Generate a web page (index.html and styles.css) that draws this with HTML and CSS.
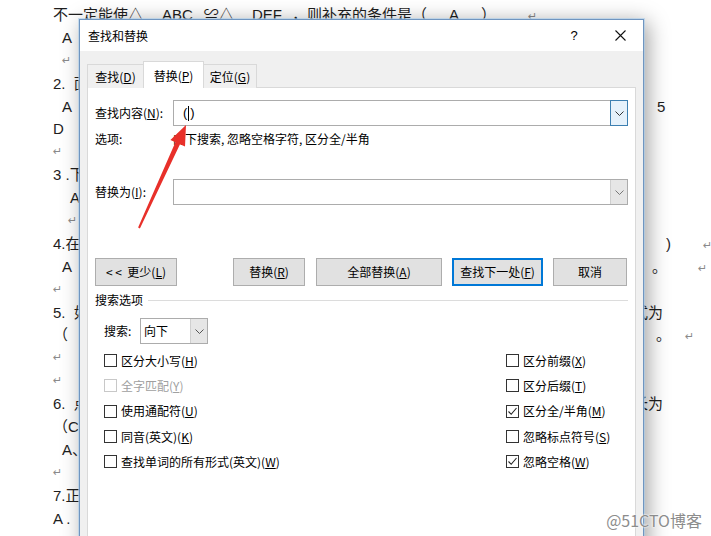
FILE: index.html
```html
<!DOCTYPE html>
<html lang="zh">
<head>
<meta charset="utf-8">
<title>查找和替换</title>
<link rel="stylesheet" href="styles.css">
</head>
<body>
<div class="doc">
  <div class="ln"><span>不一定能使△<span class="m19">ABC</span><span class="m11">≌△</span><span class="m18">DEF</span><span class="m10">，则补充的条件是（</span><span class="m22">A</span><span class="m22">）</span><span class="m32 ret">↵</span></span></div>
  <div class="ln"><span class="i9">A</span></div>
  <div class="ln"><span class="i9 ret">↵</span></div>
  <div class="ln"><span>2.&nbsp;&nbsp;面</span></div>
  <div class="ln"><span class="i9">A</span><span class="m24">5</span></div>
  <div class="ln"><span>D</span></div>
  <div class="ln"><span class="ret">↵</span></div>
  <div class="ln"><span>3 .下</span></div>
  <div class="ln"><span class="i17">A</span></div>
  <div class="ln"><span class="i15 ret">↵</span></div>
  <div class="ln"><span>4.在</span><span><span class="m33">)</span><span class="m32 ret">↵</span></span></div>
  <div class="ln"><span class="i9">A</span><span><span class="m19">。</span><span class="m31 ret">↵</span></span></div>
  <div class="ln"><span class="ret">↵</span></div>
  <div class="ln"><span>5.&nbsp;&nbsp;如</span><span>式为</span></div>
  <div class="ln"><span>（</span><span><span class="m23">。</span><span class="m14 ret">↵</span></span></div>
  <div class="ln"><span class="ret">↵</span></div>
  <div class="ln"><span class="ret">↵</span></div>
  <div class="ln"><span>6.&nbsp;&nbsp;点</span><span>长为</span></div>
  <div class="ln"><span>（C</span></div>
  <div class="ln"><span class="i9">A、</span></div>
  <div class="ln"><span class="ret">↵</span></div>
  <div class="ln"><span>7.正</span></div>
  <div class="ln"><span>A .</span></div>
</div>

<div class="dialog">
  <div class="titlebar">
    <span class="title">查找和替换</span>
    <span class="help">?</span>
    <span class="close"><svg width="11" height="11" viewBox="0 0 11 11"><path d="M0.5 0.5L10.5 10.5M10.5 0.5L0.5 10.5" stroke="#111" stroke-width="1.1" fill="none"/></svg></span>
  </div>
  <div class="dbody">
    <div class="tabs">
      <div class="tab t1">查找(<u>D</u>)</div>
      <div class="tab t2">替换(<u>P</u>)</div>
      <div class="tab t3">定位(<u>G</u>)</div>
    </div>
    <div class="panel">
      <div class="form">
        <span class="lbl">查找内容(<u>N</u>):</span>
        <div class="combo"><span class="val">(<i class="caret"></i>)</span><span class="dd focus"><svg width="9" height="5" viewBox="0 0 9 5"><path d="M0.5 0.5L4.5 4.5L8.5 0.5" stroke="#333" fill="none"/></svg></span></div>
        <span class="lbl">选项:</span>
        <span class="opts">向下搜索, 忽略空格字符, 区分全/半角</span>
        <span class="lbl r3">替换为(<u>I</u>):</span>
        <div class="combo r3"><span class="val"></span><span class="dd"><svg width="9" height="5" viewBox="0 0 9 5"><path d="M0.5 0.5L4.5 4.5L8.5 0.5" stroke="#777" fill="none"/></svg></span></div>
      </div>
      <div class="btns">
        <div class="btn b1">&lt; &lt;&nbsp; 更少(<u>L</u>)</div>
        <div class="btn b2">替换(<u>R</u>)</div>
        <div class="btn b3">全部替换(<u>A</u>)</div>
        <div class="btn b4">查找下一处(<u>F</u>)</div>
        <div class="btn b5">取消</div>
      </div>
      <div class="sect"><span>搜索选项</span><span class="rule"></span></div>
      <div class="search">
        <span class="slbl">搜索:</span>
        <div class="select"><span class="sval">向下</span><span class="dd"><svg width="9" height="5" viewBox="0 0 9 5"><path d="M0.5 0.5L4.5 4.5L8.5 0.5" stroke="#555" fill="none"/></svg></span></div>
      </div>
      <div class="checks">
        <div class="ck"><span class="box"></span>区分大小写(<u>H</u>)</div>
        <div class="ck"><span class="box"></span>区分前缀(<u>X</u>)</div>
        <div class="ck off"><span class="box"></span>全字匹配(<u>Y</u>)</div>
        <div class="ck"><span class="box"></span>区分后缀(<u>T</u>)</div>
        <div class="ck"><span class="box"></span>使用通配符(<u>U</u>)</div>
        <div class="ck"><span class="box"><svg width="11" height="11" viewBox="0 0 11 11"><path d="M1.5 5.5L4.2 8.3L9.5 2" stroke="#222" stroke-width="1.1" fill="none"/></svg></span>区分全/半角(<u>M</u>)</div>
        <div class="ck"><span class="box"></span>同音(英文)(<u>K</u>)</div>
        <div class="ck"><span class="box"></span>忽略标点符号(<u>S</u>)</div>
        <div class="ck"><span class="box"></span>查找单词的所有形式(英文)(<u>W</u>)</div>
        <div class="ck"><span class="box"><svg width="11" height="11" viewBox="0 0 11 11"><path d="M1.5 5.5L4.2 8.3L9.5 2" stroke="#222" stroke-width="1.1" fill="none"/></svg></span>忽略空格(<u>W</u>)</div>
      </div>
    </div>
  </div>
</div>

<svg class="arrow" width="711" height="536" viewBox="0 0 711 536">
  <polygon points="138.1,227.6 175.4,142.2 170.4,139.9 186,125 185,146.5 180,144.2 139.9,228.4" fill="#e8302a"/>
</svg>

<div class="wm">@51CTO博客</div>
</body>
</html>
```

FILE: styles.css
```css
* { box-sizing: border-box; }

body {
  margin: 0;
  width: 711px;
  height: 536px;
  overflow: hidden;
  position: relative;
  background: #fff;
  font-family: "Liberation Sans", "Noto Sans CJK SC", sans-serif;
}

/* background document */
.doc {
  padding: 4px 0 0 53px;
  font-size: 15px;
  line-height: 22.9px;
  color: #1e1e1e;
  white-space: nowrap;
}
.ln {
  display: grid;
  grid-template-columns: 580px auto;
  height: 22.9px;
}
.ret {
  font-family: "DejaVu Sans", sans-serif;
  font-size: 11px;
  color: #8a8a8a;
}
.i9 { margin-left: 9px; }
.i15 { margin-left: 15px; }
.i17 { margin-left: 17px; }
.m10 { margin-left: 10px; }
.m11 { margin-left: 11px; }
.m14 { margin-left: 14px; }
.m18 { margin-left: 18px; }
.m19 { margin-left: 19px; }
.m22 { margin-left: 22px; }
.m23 { margin-left: 23px; }
.m24 { margin-left: 24px; }
.m31 { margin-left: 31px; }
.m32 { margin-left: 32px; }
.m33 { margin-left: 33px; }

/* dialog window */
.dialog {
  position: absolute;
  left: 79px;
  top: 19px;
  width: 565px;
  height: 540px;
  border: 1px solid #6f95c0;
  background: #f0f0f0;
  box-shadow: 0 0 0 1px rgba(170, 205, 235, 0.6), 4px 3px 20px rgba(0, 0, 0, 0.38);
  font-family: "Noto Sans CJK SC", sans-serif;
  font-size: 12px;
  line-height: 16px;
  color: #000;
  display: flex;
  flex-direction: column;
}
.titlebar {
  height: 31px;
  background: #fff;
  display: flex;
  align-items: center;
  padding-left: 8px;
}
.title { flex: 1; }
.help {
  width: 28px;
  text-align: center;
  font-family: "Liberation Sans", sans-serif;
  font-size: 13px;
}
.close {
  width: 46px;
  margin-left: 9px;
  display: flex;
  justify-content: center;
  align-items: center;
}
.dbody {
  flex: 1;
  padding: 10px 7px 0;
}
.tabs {
  display: flex;
  align-items: flex-end;
  height: 27px;
}
.tab {
  height: 24px;
  border: 1px solid #d9d9d9;
  border-bottom: none;
  background: #f0f0f0;
  display: flex;
  align-items: center;
  justify-content: center;
}
.t1 { width: 57px; }
.t2 {
  width: 61px;
  height: 27px;
  margin-left: -1px;
  background: #fff;
  position: relative;
  z-index: 1;
  padding-top: 1px;
}
.t3 { width: 54px; margin-left: -1px; }

.panel {
  margin-top: -1px;
  height: 470px;
  background: #fff;
  border: 1px solid #d9d9d9;
  padding: 12px 7px 0;
}
.form {
  display: grid;
  grid-template-columns: 78px 1fr;
  grid-template-rows: 26px 26px auto;
  align-items: center;
}
.form .r3 { margin-top: 27px; }
.combo {
  height: 26px;
  border: 1px solid #acacac;
  background: #fff;
  display: flex;
}
.val {
  flex: 1;
  padding-left: 9px;
  display: flex;
  align-items: center;
  font-family: "Liberation Sans", sans-serif;
  font-size: 13px;
}
.caret {
  display: inline-block;
  width: 1px;
  height: 15px;
  background: #000;
  margin: 0 1px;
}
.dd {
  width: 17px;
  display: flex;
  align-items: center;
  justify-content: center;
  background: #e6e6e6;
  border-left: 1px solid #cfcfcf;
}
.dd.focus {
  width: 18px;
  margin: -1px -1px -1px 0;
  background: #e5f1fb;
  border: 1px solid #3c7fb1;
}
.opts { white-space: nowrap; }

.btns {
  display: flex;
  margin-top: 53px;
}
.btn {
  height: 28px;
  border: 1px solid #adadad;
  background: #e1e1e1;
  display: flex;
  align-items: center;
  justify-content: center;
  white-space: nowrap;
}
.b1 { width: 82px; }
.b2 { width: 72px; margin-left: 56px; }
.b3 { width: 126px; margin-left: 11px; }
.b4 { width: 91px; margin-left: 10px; border: 2px solid #0078d7; }
.b5 { width: 74px; margin-left: 10px; }

.sect {
  margin-top: 6px;
  height: 16px;
  display: flex;
  align-items: center;
}
.rule {
  flex: 1;
  height: 1px;
  background: #dcdcdc;
  margin-left: 5px;
}
.search {
  margin-top: 10px;
  padding-left: 9px;
  display: flex;
  align-items: center;
}
.slbl { width: 36px; }
.select {
  width: 68px;
  height: 26px;
  border: 1px solid #acacac;
  background: #fff;
  display: flex;
}
.sval {
  flex: 1;
  padding-left: 3px;
  display: flex;
  align-items: center;
}

.checks {
  margin-top: 4px;
  padding-left: 9px;
  display: grid;
  grid-template-columns: 402px 1fr;
  grid-auto-rows: 25.3px;
}
.ck {
  display: flex;
  align-items: center;
  white-space: nowrap;
}
.box {
  width: 13px;
  height: 13px;
  border: 1px solid #333;
  background: #fff;
  margin-right: 4px;
  display: flex;
  align-items: center;
  justify-content: center;
}
.ck.off { color: #a0a0a0; }
.ck.off .box { border-color: #c8c8c8; }

/* overlays */
.arrow {
  position: absolute;
  left: 0;
  top: 0;
  pointer-events: none;
}
.wm {
  position: absolute;
  right: 9px;
  bottom: 6px;
  font-family: "Noto Sans CJK SC", sans-serif;
  font-size: 16px;
  line-height: 20px;
  color: #8c8c8c;
  text-shadow: 0 0 2px #fff, 0 0 2px #fff;
}
```
